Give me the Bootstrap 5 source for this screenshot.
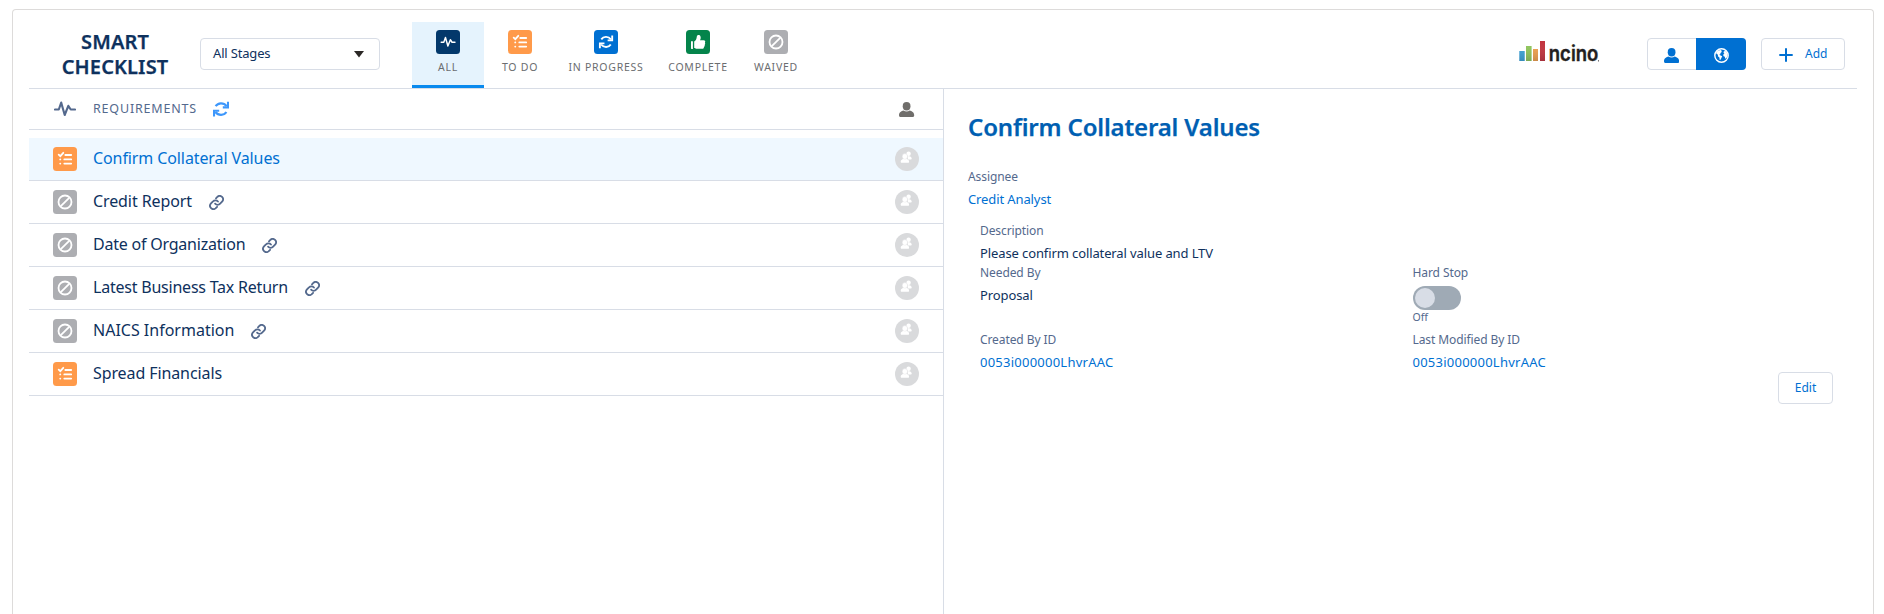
<!DOCTYPE html>
<html lang="en">
<head>
<meta charset="utf-8">
<title>Smart Checklist</title>
<link href="https://cdn.jsdelivr.net/npm/bootstrap@5.3.0/dist/css/bootstrap.min.css" rel="stylesheet">
<script src="https://cdn.jsdelivr.net/npm/bootstrap@5.3.0/dist/js/bootstrap.bundle.min.js" defer></script>
<style>
  :root { --line:#d8dde6; --ink:#0e315d; --muted:#54698d; --link:#0070d2; }
  body { font-family:"Noto Sans",sans-serif; font-size:13px; line-height:20px; color:var(--ink); background:#fff; }
  .shell { margin:9px 10px 0 12px; padding:12px 16px 0; height:605px; border:1px solid #dddbda; border-bottom:0; border-radius:4px 4px 0 0; }
  .topbar { height:67px; border-bottom:1px solid var(--line); }
  .brand { width:154px; margin:0 0 0 9px; font-weight:600; font-size:20px; line-height:25px; letter-spacing:.12px; text-align:center; padding-top:7px; -webkit-text-stroke:.25px; }
  .stages { width:180px; height:32px; margin:16px 32px 0 8px; border:1px solid var(--line); border-radius:4px; padding:0 15px 0 12px; letter-spacing:-.17px; }
  .stages span { margin-bottom:2px; }
  .tabs-bar { font-size:10.5px; line-height:16px; letter-spacing:.75px; color:#6b6d70; }
  .tab-item { width:72px; height:66px; padding-top:8px; border-bottom:3px solid transparent; }
  .tab-item.on { background:#e5f3fd; border-color:#0a8aee; }
  .tab-item span { margin-top:5px; }
  .tab-wide { width:100px; }
  .tab-mid { width:84px; }
  .ico { width:24px; height:24px; flex:none; display:block; }
  .actions { padding:16px 12px 0 0; }
  .logo { margin:3px 47px 0 0; overflow:visible; }
  .btnbox { height:32px; border:1px solid var(--line); border-radius:4px; color:var(--link); background:#fff; font-size:12px; line-height:18px; }
  .scope { width:99px; }
  .scope-half { width:48px; padding:2px 1px 0 0; }
  .scope-on { width:50px; margin:-1px -1px -1px 0; border-radius:0 4px 4px 0; background:var(--link); color:#fff; padding-top:2px; }
  .add-btn { width:84px; margin-left:15px; padding:0 0 1px 17px; gap:12px; }
  .add-btn svg { margin-top:3px; }
  .edit-btn { width:55px; margin:-1px 0 0 auto; padding-bottom:1px; }
  .left-pane { width:915px; border-right:1px solid var(--line); height:525px; flex:none; }
  .req-head { height:41px; border-bottom:1px solid var(--line); margin-bottom:8px; padding:0 28px 0 25px; color:var(--muted); font-size:12.5px; letter-spacing:.82px; }
  .req-head .cap { margin:0 16px 0 17px; }
  .req { height:43px; border-bottom:1px solid var(--line); padding:0 24px; font-size:16px; }
  .req .cap { margin:0 17px 2px 16px; }
  .req.on { background:#eff8ff; color:var(--link); }
  .snug { letter-spacing:-.1px; }
  .snugger { letter-spacing:-.22px; }
  .gray { color:#706e6b; }
  .refresh { color:#3d97fb; }
  .detail { padding:0 24px; min-width:0; }
  .lab { color:var(--muted); font-size:12px; line-height:18px; margin-bottom:3px; letter-spacing:-.09px; }
  .val, .idval { margin-bottom:1px; }
  .val { letter-spacing:-.11px; }
  .idval { letter-spacing:.24px; }
  .lnk { color:var(--link); }
  .ttl { font-size:24px; line-height:30px; font-weight:600; color:#005fb2; margin:23px 0 26px; letter-spacing:-.16px; -webkit-text-stroke:.25px; }
  .fields { margin:13px 0 0 12px; }
  .pair > div:first-child { width:432.5px; flex:none; }
  .pair-tall { height:67px; }
  .toggle { width:48px; height:24px; margin-top:4px; border-radius:12px; background:#9faab5; padding:2px; }
  .toggle i { display:block; width:20px; height:20px; border-radius:50%; background:#d8dde6; }
  .off { font-size:10.500px; line-height:15px; color:var(--muted); }
</style>
</head>
<body class="overflow-hidden">
<svg width="0" height="0" class="position-absolute">
  <defs>
    <path id="pulse" d="M1 8.500H4.800L7.200 1.600 10.700 14 14.300 4.800 16.700 8.500H21" fill="none" stroke="currentColor" stroke-width="2.100" stroke-linejoin="round" stroke-linecap="round"/>
    <g id="todo"><rect width="24" height="24" rx="3.500" fill="#ff9a4a"/><path d="M5.700 7.700l1.600 1.500 3-3.400M12.300 8H18.200M11.300 12.400h6.900M11.300 16.600h6.900M7.200 12.400h.1M7.200 16.600h.1" fill="none" stroke="#fff" stroke-width="1.800" stroke-linecap="round"/></g>
    <g id="ban"><rect width="24" height="24" rx="3.500" fill="#adaeb2"/><circle cx="12" cy="12" r="6.500" fill="none" stroke="#fff" stroke-width="1.800"/><path d="M7.800 16.200l8.400-8.400" stroke="#fff" stroke-width="1.800"/></g>
    <g id="sync" fill="none" stroke="currentColor" stroke-width="2.100"><path d="M2.600 5.200C5 1.600 10.500 1.200 13.600 5.200M13.400 11C11 14.600 5.500 15 2.400 11"/><path d="M15 .8v5.600H9.800M1 15.400V9.800H6.200"/></g>
    <g id="user" fill="currentColor"><ellipse cx="7.600" cy="4.200" rx="3.900" ry="4.200"/><path d="M0 13.200c0-2.700 2.500-4 4.500-4.600 1.900 1.200 4.300 1.200 6.200 0 2 .6 4.500 1.900 4.500 4.600 0 1.100-.7 1.800-1.500 1.800H1.500C.7 15 0 14.300 0 13.200z"/></g>
    <g id="group"><circle cx="12" cy="12" r="12" fill="#d9dadc"/><g fill="#fff"><circle cx="13.600" cy="6.700" r="2.200"/><path d="M12.800 9l2.500.5c.9.500 1.400 1.200 1.400 2.100 0 .6-.3.900-.8.900h-3.100z"/><ellipse cx="9.900" cy="9.500" rx="2.700" ry="2.900" stroke="#d9dadc" stroke-width=".4"/><path d="M5.700 14.500c0-1.500 1.300-2.200 2.700-2.600.9.600 2.100.6 3 0 1.400.4 2.700 1.100 2.700 2.600 0 .8-.3 1.300-.9 1.300H6.600c-.6 0-.9-.5-.9-1.300z"/></g></g>
    <g id="link" transform="translate(-1.100 -1.100) scale(.72)" fill="none" stroke="#54698d" stroke-width="2.500" stroke-linecap="round"><path d="M10 13.500a4.600 4.600 0 0 0 7 0l3-3a4.700 4.700 0 0 0-6.600-6.600l-2.200 2.200"/><path d="M14 10.500a4.600 4.600 0 0 0-7 0l-3 3a4.700 4.700 0 0 0 6.600 6.600l2.200-2.200"/></g>
    <linearGradient id="sheen" x2="0" y2="1"><stop offset="0" stop-color="#fff" stop-opacity="0"/><stop offset="1" stop-color="#223" stop-opacity=".18"/></linearGradient>
  </defs>
</svg>
<main class="shell">
  <header class="topbar d-flex align-items-start">
    <h2 class="brand">SMART<br>CHECKLIST</h2>
    <div class="stages d-flex align-items-center justify-content-between"><span>All Stages</span><svg width="10" height="7"><path d="M0 0h10L5 6.500z" fill="#2b2826"/></svg></div>
    <nav class="tabs-bar d-flex text-nowrap">
      <div class="tab-item on d-flex flex-column align-items-center"><svg class="ico text-white"><rect width="24" height="24" rx="3.500" fill="#03386b"/><use href="#pulse" transform="translate(4.500 6.400) scale(.69)"/></svg><span>ALL</span></div>
      <div class="tab-item d-flex flex-column align-items-center"><svg class="ico"><use href="#todo"/></svg><span>TO DO</span></div>
      <div class="tab-item tab-wide d-flex flex-column align-items-center"><svg class="ico text-white"><rect width="24" height="24" rx="3.500" fill="#0070d2"/><use href="#sync" transform="translate(5 4.800) scale(.88)"/></svg><span>IN PROGRESS</span></div>
      <div class="tab-item tab-mid d-flex flex-column align-items-center"><svg class="ico"><rect width="24" height="24" rx="3.500" fill="#04844b"/><path d="M5 11.200h1.900v7.700H5.700c-.5 0-.7-.3-.7-.7zM8.200 18V11.400c1.500-.6 2.400-2.400 2.600-4.700.1-2 3-2.200 3.700-.2.500 1.500-.1 3-.5 3.700h3.600c1.700 0 2 1.400 1.300 2.400.5.900.3 1.700-.2 2.300.2.900-.1 1.500-.7 2-.1 1.200-.8 1.900-1.800 1.900H11c-1.200 0-1.800-.8-2.800-.8z" fill="#fff"/></svg><span>COMPLETE</span></div>
      <div class="tab-item d-flex flex-column align-items-center"><svg class="ico"><use href="#ban"/></svg><span>WAIVED</span></div>
    </nav>
    <div class="actions ms-auto d-flex">
      <svg width="81" height="28" class="logo">
        <path d="M.3 10h5.400v10H.3z" fill="#3aa3d8"/><path d="M7 5h5.600v15H7z" fill="#8fc65a"/><path d="M14 8h5v12h-5z" fill="#f0a04c"/><path d="M21 0h5v20h-5z" fill="#c2323d"/><path d="M.3 10h5.400v10H.3zM7 5h5.600v15H7zM14 8h5v12h-5zM21 0h5v20h-5z" fill="url(#sheen)"/>
        <text x="29.800" y="20.200" textLength="49.500" lengthAdjust="spacingAndGlyphs" font-family="Inter,sans-serif" font-size="20.500" font-weight="600" fill="#231f20" stroke="#231f20" stroke-width=".4">ncino</text><circle cx="79.500" cy="19.800" r=".6" fill="#231f20"/>
      </svg>
      <div class="btnbox scope d-flex">
        <div class="scope-half d-flex align-items-center justify-content-center"><svg width="15" height="15"><use href="#user"/></svg></div>
        <div class="scope-on d-flex align-items-center justify-content-center"><svg width="15" height="15"><circle cx="7.500" cy="7.500" r="6.700" fill="none" stroke="#fff" stroke-width="1.400"/><path d="M2.200 4.200C3.600 2.400 5.600 1.800 7.600 2l-.5 1.100.9.700-1.500 1.300-.3 1.300-1.200.3 1.700.7 1.500.9-.7 1.500-1 1.900-.8.300-.3-2.400-1.500-1.400.1-1.500L2.400 5.800zM9.800 3.300l1.800-.3 1.600 2 .4 2.700-1.100 2.400-1.200.7-.5-2-1.400-.8-.1-1.600 1.200-1-.9-.5z" fill="#fff"/></svg></div>
      </div>
      <div class="btnbox add-btn d-flex align-items-center"><svg width="14" height="14"><path d="M7 .3v13.400M.3 7h13.400" stroke="currentColor" stroke-width="2"/></svg><span>Add</span></div>
    </div>
  </header>
  <div class="d-flex">
    <section class="left-pane">
      <div class="req-head d-flex align-items-center"><svg width="22" height="16"><use href="#pulse"/></svg><span class="cap">REQUIREMENTS</span><svg width="16" height="16" class="refresh"><use href="#sync"/></svg><svg width="16" height="15" class="gray ms-auto"><use href="#user"/></svg></div>
      <div class="req on d-flex align-items-center"><svg class="ico"><use href="#todo"/></svg><span class="cap snug">Confirm Collateral Values</span><svg class="ico ms-auto"><use href="#group"/></svg></div>
      <div class="req d-flex align-items-center"><svg class="ico"><use href="#ban"/></svg><span class="cap snug">Credit Report</span><svg width="15" height="15"><use href="#link"/></svg><svg class="ico ms-auto"><use href="#group"/></svg></div>
      <div class="req d-flex align-items-center"><svg class="ico"><use href="#ban"/></svg><span class="cap snugger">Date of Organization</span><svg width="15" height="15"><use href="#link"/></svg><svg class="ico ms-auto"><use href="#group"/></svg></div>
      <div class="req d-flex align-items-center"><svg class="ico"><use href="#ban"/></svg><span class="cap snugger">Latest Business Tax Return</span><svg width="15" height="15"><use href="#link"/></svg><svg class="ico ms-auto"><use href="#group"/></svg></div>
      <div class="req d-flex align-items-center"><svg class="ico"><use href="#ban"/></svg><span class="cap">NAICS Information</span><svg width="15" height="15"><use href="#link"/></svg><svg class="ico ms-auto"><use href="#group"/></svg></div>
      <div class="req d-flex align-items-center"><svg class="ico"><use href="#todo"/></svg><span class="cap snug">Spread Financials</span><svg class="ico ms-auto"><use href="#group"/></svg></div>
    </section>
    <section class="detail flex-fill">
      <h1 class="ttl">Confirm Collateral Values</h1>
      <div class="lab">Assignee</div>
      <div class="val lnk">Credit Analyst</div>
      <div class="fields">
        <div class="lab">Description</div>
        <div class="val">Please confirm collateral value and LTV</div>
        <div class="pair pair-tall d-flex">
          <div><div class="lab">Needed By</div><div class="val">Proposal</div></div>
          <div><div class="lab">Hard Stop</div><div class="toggle"><i></i></div><div class="off">Off</div></div>
        </div>
        <div class="pair d-flex">
          <div><div class="lab">Created By ID</div><div class="idval lnk">0053i000000LhvrAAC</div></div>
          <div><div class="lab">Last Modified By ID</div><div class="idval lnk">0053i000000LhvrAAC</div></div>
        </div>
      </div>
      <div class="btnbox edit-btn d-flex align-items-center justify-content-center">Edit</div>
    </section>
  </div>
</main>
</body>
</html>
